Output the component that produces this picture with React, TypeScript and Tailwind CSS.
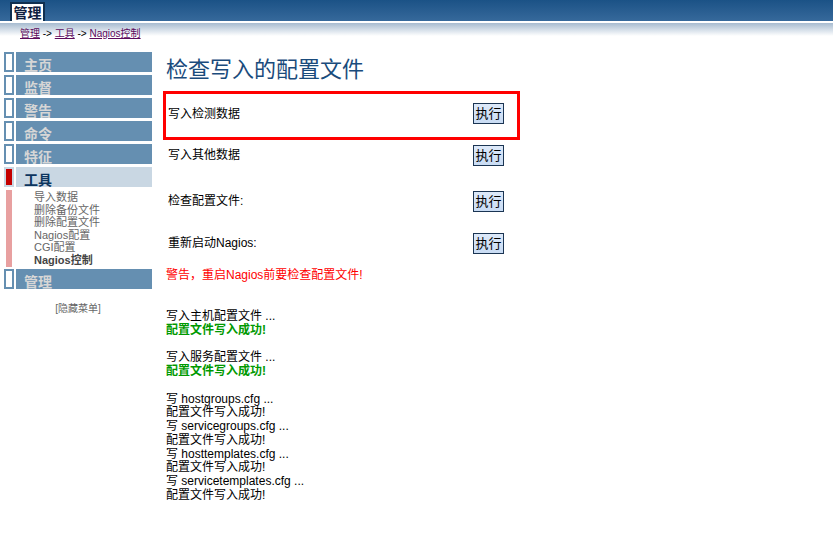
import React from "react";

const CJK = "font-['Liberation_Sans','Noto_Sans_CJK_SC',sans-serif]";

function NavItem({ label }: { label: string }) {
  return (
    <div className="flex h-[20px] mb-[3px] pl-[4px] gap-[2px]">
      <div className="w-[10px] h-[20px] border-2 border-[#658fb1] bg-white" />
      <div className="flex-1 bg-[#658fb1] overflow-hidden pl-[8px] pt-[5px]">
        <div className="text-[14px] leading-[16px] font-bold text-[#d6d6d6]">{label}</div>
      </div>
    </div>
  );
}

function Btn() {
  return (
    <button className="w-[31px] h-[21px] border border-[#1b3553] bg-gradient-to-b from-[#dde9f9] to-[#c9dcf4] text-[13px] leading-[19px] text-black p-0">
      执行
    </button>
  );
}

export default function App() {
  const sub = ["导入数据", "删除备份文件", "删除配置文件", "Nagios配置", "CGI配置"];
  const cfgs = ["hostgroups.cfg", "servicegroups.cfg", "hosttemplates.cfg", "servicetemplates.cfg"];
  return (
    <div className={`w-[833px] h-[539px] bg-white ${CJK} overflow-hidden`}>
      <div className="h-[21px] bg-gradient-to-b from-[#1b5286] to-[#36699b] flex items-end pl-[10px]">
        <div className="h-[19px] w-[35px] bg-white border-2 border-[#0f2f50] border-b-0 flex items-center justify-center text-[14px] font-bold text-[#0f2040] leading-none">
          管理
        </div>
      </div>
      <div className="h-[2px] bg-white" />
      <div className="h-[22px] bg-[linear-gradient(to_bottom,#a6bbd0,#ffffff_13px)] pl-[20px] pt-[5px] text-[10px] leading-[12px] text-black">
        <span className="underline text-[#5c0a5c]">管理</span> -&gt; <span className="underline text-[#5c0a5c]">工具</span> -&gt;{" "}
        <span className="underline text-[#5c0a5c]">Nagios控制</span>
      </div>
      <div className="flex">
        <div className="w-[152px] pt-[7px] shrink-0">
          {["主页", "监督", "警告", "命令", "特征"].map((l) => (
            <NavItem key={l} label={l} />
          ))}
          <div className="flex h-[20px] mb-[3px] pl-[4px] gap-[2px]">
            <div className="w-[10px] h-[20px] border-2 border-[#c9d7e3] bg-[#c40000]" />
            <div className="flex-1 bg-[#c9d7e3] overflow-hidden pl-[8px] pt-[5px]">
              <div className="text-[14px] leading-[16px] font-bold text-[#0c355f]">工具</div>
            </div>
          </div>
          <div className="flex mb-[2px]">
            <div className="ml-[6px] w-[6px] bg-[#e8a0a0] h-[77px]" />
            <div className="pl-[22px] pt-[1px] text-[11px] leading-[12.5px] text-[#666666]">
              {sub.map((s) => (
                <div key={s}>{s}</div>
              ))}
              <div className="font-bold text-[#444444]">Nagios控制</div>
            </div>
          </div>
          <NavItem label="管理" />
          <div className="mt-[14px] text-center pl-[4px] text-[10px] leading-[12px] text-[#666666]">[隐藏菜单]</div>
        </div>
        <div className="ml-[11px] pt-[12px]">
          <div className="pl-[3px] text-[22px] leading-[26px] text-[#1a4b7c]">检查写入的配置文件</div>
          <div className="mt-[8px] w-[357px] h-[49px] border-[3px] border-[#ff0000] flex items-center justify-between pl-[2px] pr-[13px] pb-[4px] text-[12px] text-black">
            <span>写入检测数据</span>
            <Btn />
          </div>
          <div className="w-[357px] h-[30px] flex items-center justify-between pl-[5px] pr-[16px] text-[12px] text-black">
            <span>写入其他数据</span>
            <Btn />
          </div>
          <div className="w-[357px] h-[62px] flex items-center justify-between pl-[5px] pr-[16px] text-[12px] text-black">
            <span>检查配置文件:</span>
            <Btn />
          </div>
          <div className="w-[357px] h-[22px] flex items-center justify-between pl-[5px] pr-[16px] text-[12px] text-black">
            <span>重新启动Nagios:</span>
            <Btn />
          </div>
          <div className="mt-[14px] pl-[3px] text-[12px] leading-[14px] text-[#ff0000]">警告，重启Nagios前要检查配置文件!</div>
          <div className="mt-[28px] pl-[3px] text-[12px] leading-[13.75px] text-black">
            <div>写入主机配置文件 ...</div>
            <div className="font-bold text-[#009900]">配置文件写入成功!</div>
            <div className="h-[13.75px]" />
            <div>写入服务配置文件 ...</div>
            <div className="font-bold text-[#009900]">配置文件写入成功!</div>
            <div className="h-[13.75px]" />
            {cfgs.map((c) => (
              <React.Fragment key={c}>
                <div>写 {c} ...</div>
                <div>配置文件写入成功!</div>
              </React.Fragment>
            ))}
          </div>
        </div>
      </div>
    </div>
  );
}
